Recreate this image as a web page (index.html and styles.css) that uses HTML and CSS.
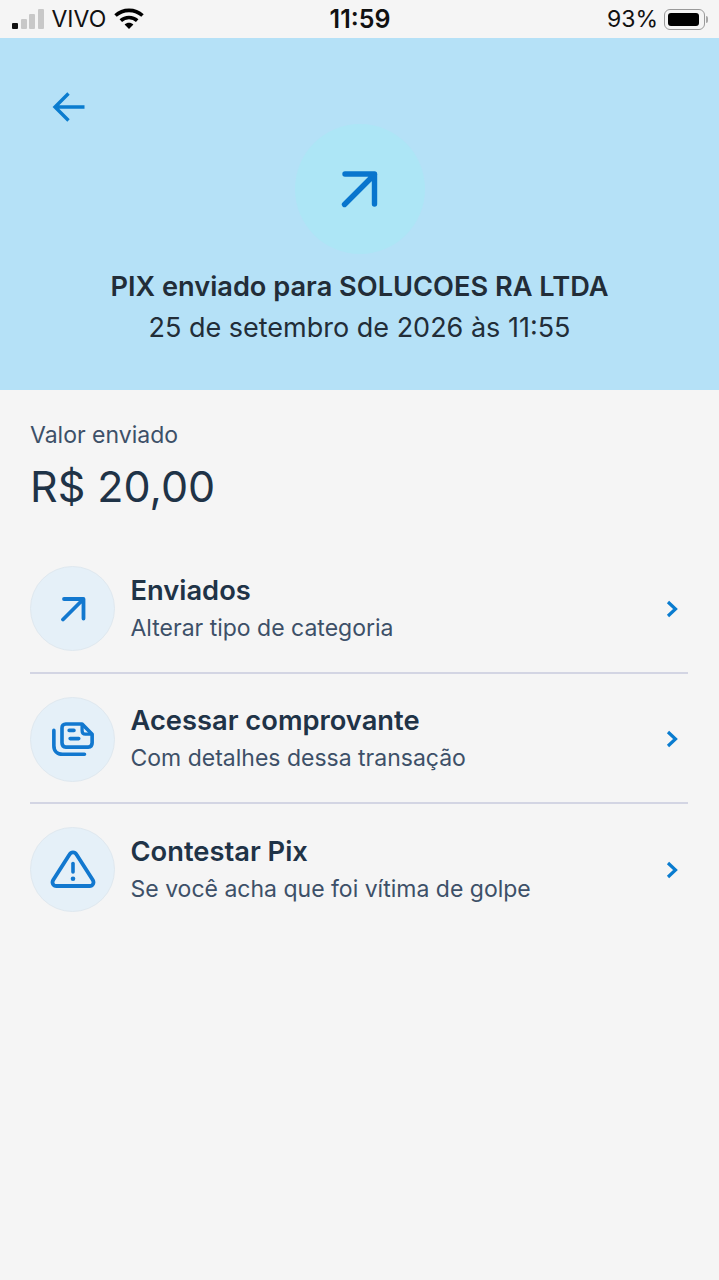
FILE: index.html
```html
<!DOCTYPE html>
<html lang="pt-BR">
<head>
    <meta charset="UTF-8">
    <meta name="viewport" content="width=device-width, initial-scale=1.0">
    <title>PIX enviado</title>
    <link rel="stylesheet" href="styles.css">
</head>
<body>
    <!-- Status bar -->
    <div class="status-bar">
        <div class="status-left">
            <div class="signal">
                <span class="bar bar-1"></span>
                <span class="bar bar-2"></span>
                <span class="bar bar-3"></span>
                <span class="bar bar-4"></span>
            </div>
            <span class="carrier">VIVO</span>
            <svg class="wifi" width="30" height="22" viewBox="0 0 30 22" aria-hidden="true">
                <path d="M1.500 7.500C8.900 .6 21.100 .6 28.500 7.500" fill="none" stroke="#000" stroke-width="3.600"/>
                <path d="M6.800 12.600C11.300 8.400 18.700 8.400 23.200 12.600" fill="none" stroke="#000" stroke-width="3.600"/>
                <path d="M10.600 16.500C13.200 14.200 16.800 14.200 19.400 16.500L15 21Z" fill="#000"/>
            </svg>
        </div>
        <div class="status-time">11:59</div>
        <div class="status-right">
            <span class="battery-pct">93%</span>
            <div class="battery"><div class="battery-fill"></div></div>
            <span class="battery-tip"></span>
        </div>
    </div>

    <!-- Header -->
    <header class="hero">
        <button class="back" aria-label="Voltar">
            <svg width="34" height="34" viewBox="0 0 34 34" aria-hidden="true">
                <path d="M32.500 17H3M16.500 3.500L3 17L16.500 30.500" fill="none" stroke="#0a7ccf" stroke-width="3.400"/>
            </svg>
        </button>
        <div class="hero-circle">
            <svg width="40" height="40" viewBox="0 0 40 40" aria-hidden="true">
                <path d="M4.500 35.500L34.500 5.500M5 5H34.500V35" fill="none" stroke="#0875cd" stroke-width="5.400" stroke-linecap="round" stroke-linejoin="round"/>
            </svg>
        </div>
        <h1 class="hero-title">PIX enviado para SOLUCOES RA LTDA</h1>
        <p class="hero-date">25 de setembro de 2026 às 11:55</p>
    </header>

    <main class="content">
        <p class="amount-label">Valor enviado</p>
        <p class="amount">R$ 20,00</p>

        <ul class="actions">
            <li class="action">
                <div class="action-icon">
                    <svg width="26" height="26" viewBox="0 0 26 26" aria-hidden="true">
                        <path d="M3 23.500L23 3.500M4 3H23.500V22.500" fill="none" stroke="#1278cf" stroke-width="3.800" stroke-linecap="round" stroke-linejoin="round"/>
                    </svg>
                </div>
                <div class="action-text">
                    <div class="action-title">Enviados</div>
                    <div class="action-sub">Alterar tipo de categoria</div>
                </div>
                <svg class="chevron" width="14" height="18" viewBox="0 0 14 18" aria-hidden="true">
                    <path d="M3 2L10.500 9L3 16" fill="none" stroke="#0a7ccf" stroke-width="3.200"/>
                </svg>
            </li>
            <li class="action">
                <div class="action-icon">
                    <svg width="44" height="38" viewBox="0 0 46 38" aria-hidden="true">
                        <path d="M3 10V26C3 31.500 6.500 35 12 35H35" fill="none" stroke="#1278cf" stroke-width="3.800" stroke-linecap="round"/>
                        <path d="M11.500 7.500C11.500 4.800 13 3.300 15.500 3.300H32.500L43 14V23C43 26 41.500 27.500 39 27.500H15.500C13 27.500 11.500 26 11.500 23Z" fill="none" stroke="#1278cf" stroke-width="3.800" stroke-linejoin="round"/>
                        <path d="M32.500 3.300V10C32.500 12.500 34 14 36 14H43" fill="none" stroke="#1278cf" stroke-width="3.400"/>
                        <path d="M19 10H24M20 18.600H29" fill="none" stroke="#1278cf" stroke-width="3.800" stroke-linecap="round"/>
                    </svg>
                </div>
                <div class="action-text">
                    <div class="action-title">Acessar comprovante</div>
                    <div class="action-sub">Com detalhes dessa transação</div>
                </div>
                <svg class="chevron" width="14" height="18" viewBox="0 0 14 18" aria-hidden="true">
                    <path d="M3 2L10.500 9L3 16" fill="none" stroke="#0a7ccf" stroke-width="3.200"/>
                </svg>
            </li>
            <li class="action">
                <div class="action-icon">
                    <svg width="46" height="40" viewBox="0 0 46 40" aria-hidden="true">
                        <path d="M19.500 4.500C21.200 1.600 24.800 1.600 26.500 4.500L42.800 30C44.500 33 42.800 36 39.500 36H6.500C3.200 36 1.500 33 3.200 30Z" fill="none" stroke="#1278cf" stroke-width="3.800" stroke-linejoin="round"/>
                        <path d="M23 13.500V22" fill="none" stroke="#1278cf" stroke-width="3.600" stroke-linecap="round"/>
                        <circle cx="23" cy="28.800" r="2.300" fill="#1278cf"/>
                    </svg>
                </div>
                <div class="action-text">
                    <div class="action-title">Contestar Pix</div>
                    <div class="action-sub">Se você acha que foi vítima de golpe</div>
                </div>
                <svg class="chevron" width="14" height="18" viewBox="0 0 14 18" aria-hidden="true">
                    <path d="M3 2L10.500 9L3 16" fill="none" stroke="#0a7ccf" stroke-width="3.200"/>
                </svg>
            </li>
        </ul>
    </main>
</body>
</html>
```

FILE: styles.css
```css
* {
    box-sizing: border-box;
}

body {
    margin: 0;
    width: 719px;
    height: 1280px;
    overflow: hidden;
    background-color: #f5f5f5;
    font-family: Inter, sans-serif;
    color: #1f3347;
}

.status-bar {
    height: 38px;
    padding: 0 11px 0 12px;
    display: grid;
    grid-template-columns: 1fr auto 1fr;
    align-items: center;
    color: #111;
    font-size: 23px;
}

.status-left {
    display: flex;
    align-items: center;
}

.signal {
    display: flex;
    align-items: flex-end;
    gap: 2.500px;
    height: 20px;
}

.bar {
    width: 6px;
    border-radius: 1px;
    background-color: #c8c8c8;
}

.bar-1 { height: 6px; background-color: #111; }
.bar-2 { height: 10px; }
.bar-3 { height: 15px; }
.bar-4 { height: 20px; }

.carrier {
    margin-left: 8px;
    font-weight: 400;
}

.wifi {
    margin-left: 8px;
}

.status-time {
    font-size: 25px;
    font-weight: 600;
}

.status-right {
    display: flex;
    align-items: center;
    justify-content: flex-end;
}

.battery-pct {
    font-weight: 400;
}

.battery {
    width: 41px;
    height: 21px;
    margin-left: 6px;
    padding: 3px;
    border: 1.500px solid #9a9a9a;
    border-radius: 6px;
}

.battery-fill {
    height: 100%;
    width: 93%;
    border-radius: 3px;
    background-color: #000;
}

.battery-tip {
    width: 2px;
    height: 7px;
    margin-left: 1px;
    border-radius: 0 2px 2px 0;
    background-color: #a8a8a8;
}

.hero {
    position: relative;
    height: 352px;
    padding-top: 86px;
    background-color: #b5e1f7;
    text-align: center;
}

.back {
    position: absolute;
    left: 52px;
    top: 52px;
    padding: 0;
    border: none;
    background: none;
    line-height: 0;
}

.hero-circle {
    width: 130px;
    height: 130px;
    margin: 0 auto;
    display: flex;
    align-items: center;
    justify-content: center;
    border-radius: 50%;
    background-color: #ade6f6;
}

.hero-title {
    margin: 18px 0 0;
    font-size: 27.200px;
    line-height: 30px;
    font-weight: 600;
    color: #222d38;
}

.hero-date {
    margin: 11px 0 0;
    font-size: 27px;
    line-height: 30px;
    color: #222d38;
}

.content {
    padding: 30px 31px 0 30px;
}

.amount-label {
    margin: 0;
    font-size: 23px;
    line-height: 30px;
    color: #3d5068;
}

.amount {
    margin: 9px 0 0;
    font-size: 43px;
    line-height: 54px;
    font-weight: 400;
    color: #1f3347;
}

.actions {
    margin: 30px 0 0;
    padding: 0;
    list-style: none;
}

.action {
    display: flex;
    align-items: center;
    height: 130.500px;
    padding-top: 2.500px;
    border-bottom: 2px solid #d3d5e3;
}

.action:last-child {
    border-bottom-color: transparent;
}

.action-icon {
    flex: none;
    width: 85px;
    height: 85px;
    display: flex;
    align-items: center;
    justify-content: center;
    border: 1.500px solid #dfe8ef;
    border-radius: 50%;
    background-color: #e5f0f8;
}

.action-text {
    flex: 1;
    margin-left: 15.500px;
    padding-top: 1px;
}

.action-title {
    font-size: 27.300px;
    line-height: 30px;
    font-weight: 600;
    color: #1f3347;
}

.action-sub {
    margin-top: 7px;
    font-size: 23px;
    line-height: 30px;
    color: #3d5068;
}

.chevron {
    flex: none;
    margin-right: 9px;
}
```
